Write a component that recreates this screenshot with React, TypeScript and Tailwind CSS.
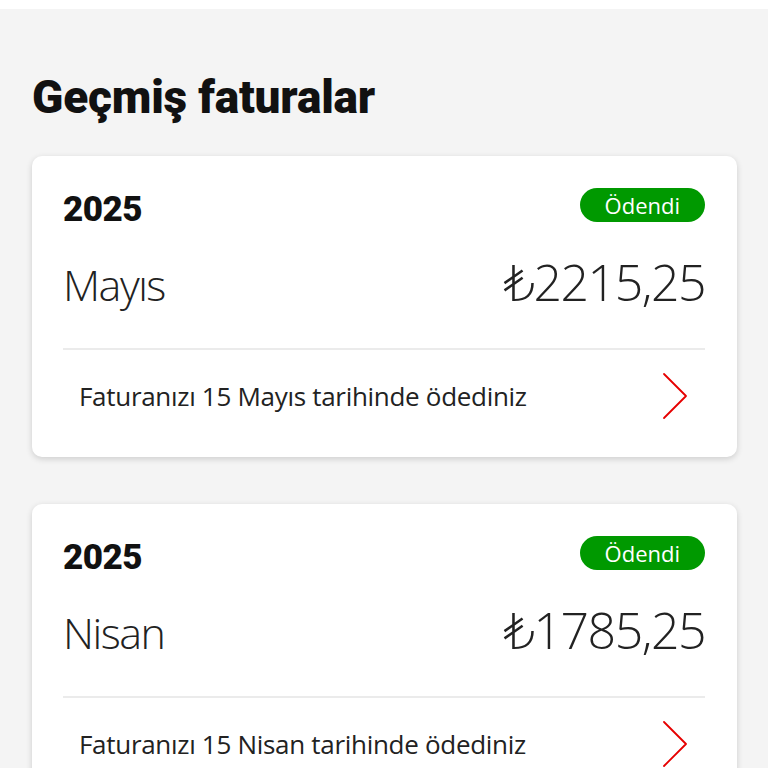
import React from 'react';

interface Bill {
  year: string;
  month: string;
  amount: string;
  paidOn: string;
}

const BILLS: Bill[] = [
  { year: '2025', month: 'Mayıs', amount: '₺2215,25', paidOn: 'Faturanızı 15 Mayıs tarihinde ödediniz' },
  { year: '2025', month: 'Nisan', amount: '₺1785,25', paidOn: 'Faturanızı 15 Nisan tarihinde ödediniz' },
];

const heavy = { fontFamily: 'Roboto, "Liberation Sans", sans-serif' };
const light = { fontFamily: '"Open Sans", "DejaVu Sans", sans-serif' };

const Chevron = () => (
  <svg width="28" height="48" viewBox="0 0 28 48" fill="none">
    <polyline points="3,2 25,24 3,46" stroke="#e60000" strokeWidth="1.8" strokeLinecap="round" strokeLinejoin="round" />
  </svg>
);

const BillCard: React.FC<{ bill: Bill }> = ({ bill }) => (
  <div className="bg-white rounded-[10px] shadow-[0_2px_6px_rgba(0,0,0,0.16)] pl-[31px] pr-8 pt-8 pb-[15px]">
    <div className="flex items-center justify-between h-[34px]">
      <span style={heavy} className="pt-[8px] text-[35px] font-black leading-none text-[#111] tracking-[-0.5px]">
        {bill.year}
      </span>
      <span style={light} className="h-[34px] px-[25px] rounded-full bg-[#009900] text-white text-[22px] leading-[34px]">
        Ödendi
      </span>
    </div>
    <div style={light} className="flex items-baseline justify-between mt-[35px] h-[50px] text-[#222] font-light">
      <span className="text-[43px] leading-none tracking-[-1.5px]">{bill.month}</span>
      <span className="text-[50px] leading-none tracking-[-1.5px]">{bill.amount}</span>
    </div>
    <div className="mt-[41px] h-[2px] bg-[#ebebeb]" />
    <div className="flex items-center justify-between h-[92px] px-4">
      <span style={light} className="text-[26px] text-[#222] tracking-[-0.3px]">{bill.paidOn}</span>
      <Chevron />
    </div>
  </div>
);

export default function App() {
  return (
    <div className="min-h-screen bg-[#f4f4f4]">
      <div className="h-[9px] bg-white" />
      <div className="px-8 pr-[31px]">
        <h1 style={heavy} className="mt-[65px] text-[46px] font-black leading-none text-[#111] tracking-[-0.2px]">
          Geçmiş faturalar
        </h1>
        <div className="mt-[36px] flex flex-col gap-[47px]">
          {BILLS.map((b) => (
            <BillCard key={b.month} bill={b} />
          ))}
        </div>
      </div>
    </div>
  );
}
